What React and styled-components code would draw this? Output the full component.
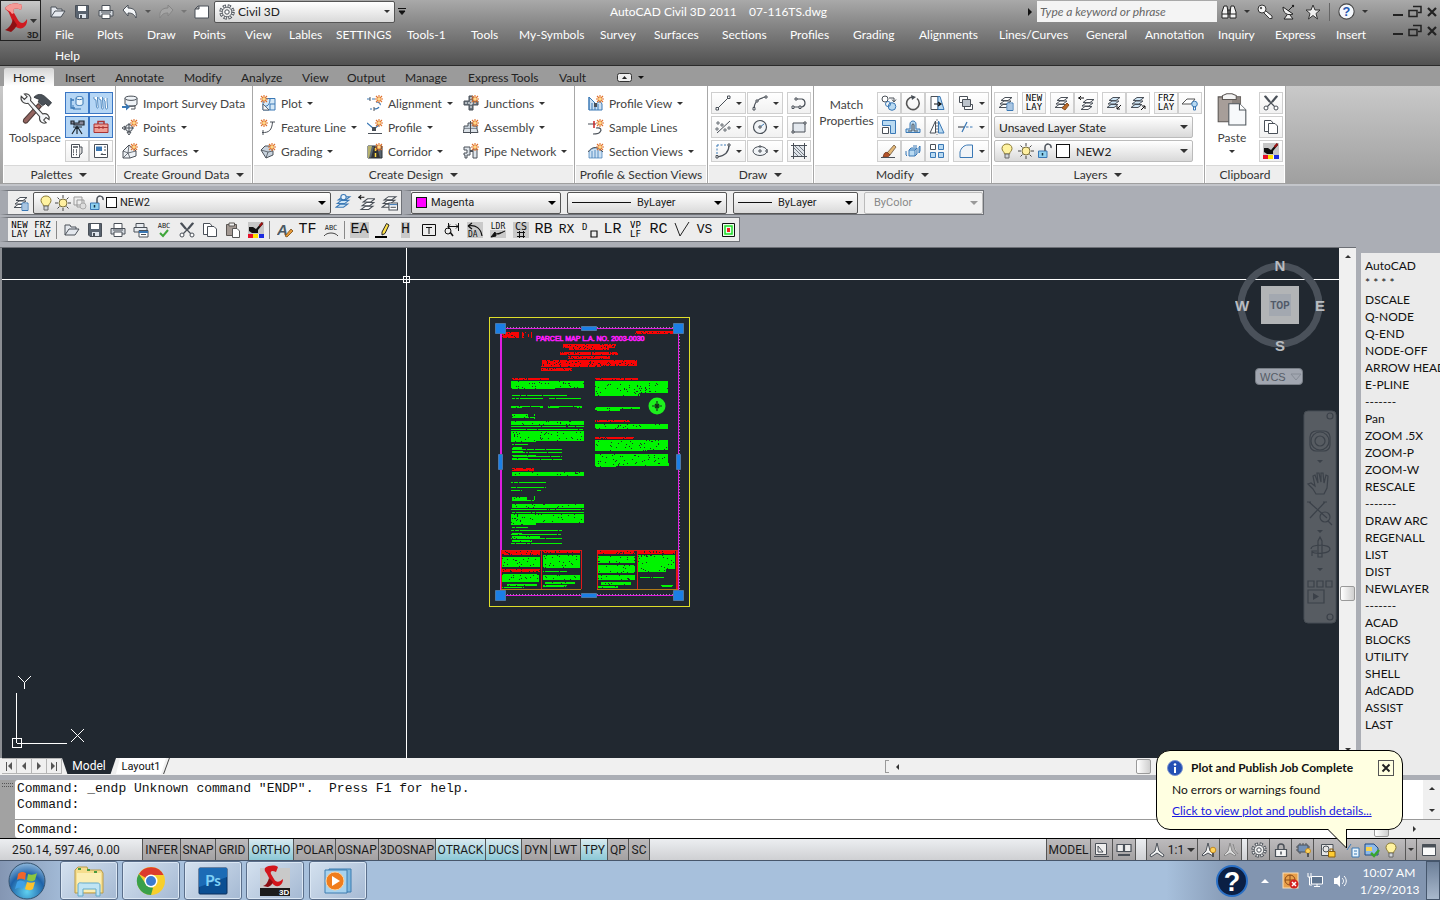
import styled, { createGlobalStyle, css } from "styled-components";

const UI = `"Lato", "Open Sans", sans-serif`;
const DENSE = `"Roboto", "Liberation Sans", sans-serif`;
const MONO = `"Liberation Mono", "DejaVu Sans Mono", monospace`;

const GlobalStyle = createGlobalStyle`
  *, *::before, *::after { box-sizing: border-box; }
  body { margin: 0; font-family: ${UI}; font-size: 12px; color: #222; }
  button, select, input { font: inherit; color: inherit; }
  button { padding: 0; border: 0; background: none; cursor: pointer; }
`;

/* ---------- icons ---------- */

const K = "#4a5058";
const B = "#3a78b5";
const L = "#b9daf2";

const Spark = () => (
  <g transform="translate(12 4)">
    <path d="M0-4V4M-4 0H4M-3-3L3 3M-3 3L3-3" stroke="#e0702a" strokeWidth="1.1" />
    <circle r="1.7" fill="#ffd98a" stroke="none" />
  </g>
);

const Layers = ({ fill = "#fff", color = K }) => (
  <g stroke={color} fill={fill}>
    <path d="M1 12.500L5 9.500H12L8 12.500Z" />
    <path d="M2 9L6 6H13L9 9Z" />
    <path d="M3 5.500L7 2.500H14L10 5.500Z" />
  </g>
);

const ICONS = {
  open: <path d="M1 13V3H6L7 5H12V7M1 13L5 7H15L11 13Z" fill="#e4e8ee" stroke={K} />,
  save: <><path d="M1.500 1.500H14.500V14.500H3L1.500 13Z" fill="#59636f" stroke={K} /><path d="M4 2H12V7H4Z" fill="#fff" /><path d="M5 10H12V14H5Z" fill="#dfe5ec" /><path d="M6 11H8V14H6Z" fill={K} /></>,
  print: <><path d="M4 6V1.500H12V6" fill="#fff" stroke={K} /><path d="M1 6.500H15V12H1Z" fill="#d5dae0" stroke={K} /><path d="M4 10H12V14.500H4Z" fill="#fff" stroke={K} /><path d="M3 8H13" stroke={K} /></>,
  preview: <><path d="M3 5V1.500H11V5M1 5.500H14V10H1Z" fill="#e8ecf0" stroke={K} /><path d="M6 8.500H15V15H6Z" fill="#fff" stroke={K} /><path d="M6 10H15" stroke={B} strokeWidth="2" /><path d="M8 12.500H13" stroke={K} /></>,
  undo: <path d="M1 6L6 1V4C12 4 15 7 14 14C12 10 10 9 6 9V12Z" fill="#f4f6f8" stroke={K} />,
  redo: <path d="M15 6L10 1V4C4 4 1 7 2 14C4 10 6 9 10 9V12Z" fill="#a5a5a5" stroke="#858585" />,
  sheet: <path d="M1 14V5L4 2H14.500V14ZM1 5H5V2" fill="#fff" stroke={K} />,
  gear: <><circle cx="8" cy="8" r="5.900" stroke={K} strokeWidth="3.600" strokeDasharray="3 1.630" /><circle cx="8" cy="8" r="5.900" stroke="#eee" strokeWidth="2" strokeDasharray="1.400 3.230" strokeDashoffset="-.8" /><circle cx="8" cy="8" r="4.800" fill="#eee" stroke={K} strokeWidth=".8" /><circle cx="8" cy="8" r="2.200" fill="#fff" stroke={K} /></>,
  binoc: <><path d="M1 14V8L3 2H6L7 8V14ZM15 14V8L13 2H10L9 8V14Z" fill="#f4f4f4" stroke="#222" /><path d="M7 6H9V10H7ZM1 10H7M9 10H15" fill="#888" stroke="#222" /></>,
  key: <><path d="M7 9L12.500 14.500H15V12L9 7" fill="#f6f6f6" stroke="#333" /><circle cx="5" cy="5" r="4" fill="#f6f6f6" stroke="#333" /><circle cx="4" cy="4" r="1.200" fill="#555" /></>,
  dish: <><path d="M2 3C2 9 6 12 12 10Z" fill="#f0f0f0" stroke="#222" /><path d="M7 7L13 1M6 11L3 15H12L9 11" fill="#eee" stroke="#222" /><circle cx="12" cy="2" r="1.200" fill="#222" /></>,
  star: <path d="M8 1L10 6H15L11 9.500L12.500 15L8 11.500L3.500 15L5 9.500L1 6H6Z" fill="#eee" stroke="#333" />,
  help: <><circle cx="8" cy="8" r="7.200" fill="#f4f7fb" stroke="#444" /><text x="8" y="12.500" textAnchor="middle" fontSize="12" fontWeight="700" fill="#2456b0" fontFamily="Liberation Sans">?</text></>,
  min: <path d="M3 11H13" stroke="#222" strokeWidth="2" />,
  restore: <><path d="M6 2.500H14V8.500H11" stroke="#222" strokeWidth="1.500" /><path d="M2 6.500H10V12.500H2Z" stroke="#222" strokeWidth="1.500" /></>,
  close: <path d="M4 4L12 12M12 4L4 12" stroke="#222" strokeWidth="2.200" />,
  tools: <><path d="M9.500 5.500L11 6.800L4.200 14.500C3.200 15 2 14 2.700 12.900Z" fill="#946560" stroke="#4c3835" strokeWidth=".5" /><path d="M7.500 2.500C9 .8 11 .8 12.500 2L15.800 5L14.300 6.700L13 5.500L11.500 6.500L9.500 4.700L10 3.500Z" fill="#4a5158" stroke="#2e3338" strokeWidth=".4" /><path d="M1.500 2L3 3.500L4.300 2.200L3 1C5 .5 6.400 2 5.900 4L11.600 10.300C13.500 9.800 15 11 14.600 13L13.200 12L12.100 13.200L13.300 14.500C11.300 15.200 9.700 13.700 10.200 11.600L4.700 5.300C2.700 5.800 1 4.200 1.500 2Z" fill="#f4f6f8" stroke="#444" strokeWidth=".5" /></>,
  toolspace: <><path d="M2 3V13H6M2 5H5" stroke={B} strokeWidth="1.300" /><path d="M7 3C7 1 14 1 14 3V9C14 11 7 11 7 9Z" fill="#e8f4fc" stroke={B} /><path d="M7 3.500C8 5 13 5 14 3.500M4 10V14H12" stroke={B} /></>,
  wrenches: <path d="M1 2V4L3 5L3.500 12C4 14 6 13 5 11L4.500 5V2M6 2V4L8 5L8.500 13C9 15 11 14 10 12L9.500 5V2M11 3V5L12 6L12.500 13C13 15 15 14 14.500 12L14 6V3" fill="#fff" stroke={B} strokeWidth=".8" />,
  survey: <path d="M2 2H5V4H10V2H15V6H5V5H2ZM8 7L3 15M8 7V15M8 7L13 15M4 8H13" stroke="#1e2830" strokeWidth="1.200" fill="#889" />,
  toolbox: <><path d="M5 5V2.500H11V5" stroke="#a33" strokeWidth="1.500" /><path d="M1 5H15V13.500H1Z" fill="#ef9e94" stroke="#a33" /><path d="M1 8.500H15M6 7V10M10 7V10" stroke="#a33" /></>,
  calc: <><path d="M2.500 1.500H10.500V14.500H2.500Z" fill="#fff" stroke={K} /><path d="M4 4H9M4 7H5M7 7H8M4 9H5M7 9H8M4 11.500H5M7 11.500H8" stroke={K} strokeWidth="1.400" /><path d="M10.500 4H13V10L10.500 12" fill="#ddd" stroke={K} /></>,
  propPalette: <><path d="M1.500 1.500H14.500V14.500H1.500Z" fill="#fff" stroke={K} /><path d="M3 3.500H9V8H3Z" fill={B} /><path d="M11 4H13M11 7H13M8 11.500L9.500 10M8 11.500H13" stroke={K} /></>,
  importSurvey: <><path d="M3 3C3 .5 15 .5 15 3V9C15 12 3 12 3 9Z" fill="#f0f4f8" stroke={K} /><path d="M3 3.500C4 6 14 6 15 3.500M7 11H13V14H9" stroke={K} /><path d="M0 11H4V8.500L8 12L4 15.500V13H0Z" fill={B} /></>,
  points: <><circle cx="7" cy="9" r="3.500" fill="#eef2f6" stroke={K} /><path d="M7 4V14M2 9H12M0 9L3 7V11ZM7 16L5 13H9Z" stroke={K} fill="#fff" /><Spark /></>,
  surfaces: <><path d="M1 15V8L7 2L14 8V13L8 15Z" fill="#eef2f6" stroke={K} /><path d="M1 8L6 10L14 8M6 10L8 15M6 10L1 15M7 2L6 10" stroke={K} strokeWidth=".8" /><Spark /></>,
  plot: <><path d="M3 3.500H15V15H3Z" fill="#d4e8f7" stroke={B} /><path d="M3 11C7 12 10 10 10 4M10 15V9H15" stroke={B} /><path d="M3 15V9L9 15Z" fill="#f4f6f8" stroke={K} strokeWidth=".8" /><g transform="translate(-8 0)"><Spark /></g></>,
  feature: <><path d="M2 13.500C9 14 12 11 12.500 3M10 3H15M3 11V16" stroke={K} /><g transform="translate(-8 0)"><Spark /></g></>,
  grading: <><path d="M1 7L5 3H10L13 8V12L6 15Z" fill="#c8d3de" stroke={K} /><path d="M1 7L8 9L13 8M8 9L6 15" stroke={K} strokeWidth=".8" /><Spark /></>,
  alignment: <><path d="M0 4H3M5 4H8M9 7C12 7 14 9 13 10M12 12C11 14 9 14 7 14M5 14H3" stroke={B} strokeWidth="1.200" /><path d="M3 2V6M7 12V16" stroke={K} /><Spark /></>,
  profile: <><path d="M1 14.500H15" stroke={K} /><path d="M0 4L7 10L12 6" stroke={B} strokeWidth="1.300" /><path d="M5 8H9V12H5Z" fill={K} /><Spark /></>,
  corridor: <><path d="M1 3H15V15H1Z" fill="#59646e" stroke="#2b3238" /><path d="M4 15L7 4H10L13 15Z" fill="#333" /><path d="M8.500 5V8M8.500 10V14" stroke="#ffd940" strokeWidth="1.500" /><path d="M1 3H5L2 15H1Z" fill="#b6b16e" /><Spark /></>,
  junction: <><path d="M6 1H10V6H15V10H10V15H6V10H1V6H6Z" fill="#6b7680" stroke="#4a5058" /><path d="M8 2V14M2 8H14" stroke="#fff" strokeDasharray="2 1" /><Spark /></>,
  assembly: <><path d="M1 7H5V4H10V7H14V10H1Z" fill="#c6d0d9" stroke={K} /><path d="M1 10L0 13.500H15L14 10M7.500 2V15" fill="#dce2e8" stroke={K} /><Spark /></>,
  pipe: <><path d="M1 4H7V12H4V15H2V12H1V10H4V7H1ZM10 6H14V15H10Z" fill="#dfe5eb" stroke={K} /><path d="M7 8H10" stroke={K} strokeWidth="2" /><Spark /></>,
  profileView: <><path d="M1 15V2L5 6L8 9L12 6L14 9V15Z" fill="#cde1f3" stroke={B} /><path d="M4 8V15M7 11V15M10 9V15M1 2V15" stroke={B} /><path d="M6 8H9V12H6Z" fill={K} /><Spark /></>,
  sampleLines: <><path d="M0 5H8M8 9C13 8 14 11 12 13C11 15 8 15 5 15" stroke={K} strokeWidth="1.200" /><path d="M6 2V9" stroke="#c22" strokeWidth="1.500" /><Spark /></>,
  sectionViews: <><path d="M1 15V9C4 4 10 3 14 9V15Z" fill="#cde1f3" stroke={B} strokeWidth=".7" /><path d="M4 8V15M7 7V15M10 7V15" stroke={B} strokeWidth=".8" /><path d="M0 9C4 3 10 3 15 9" stroke={K} /><Spark /></>,
  line: <><path d="M2 14L14 2" stroke={K} /><path d="M1 12.500H3.500V15H1ZM12.500 1H15V3.500H12.500Z" fill="#fff" stroke={K} /></>,
  arc: <><path d="M2 14C2 8 6 3 14 2" stroke={K} strokeWidth="1.200" /><path d="M1 12.500H3V15H1ZM4 5H6V7H4ZM13 1H15V3H13Z" fill="#fff" stroke={K} /></>,
  pline: <><path d="M2 12H11C15 11 15 5 11 4H5" stroke={K} strokeWidth="1.200" /><path d="M1 11H3V13.500H1ZM8 11H10V13.500H8ZM4 3H6V5H4Z" fill="#fff" stroke={K} /></>,
  divide: <><path d="M2 14L15 2" stroke={K} /><path d="M2 3H4V5H2ZM6 5H8V7H6ZM1 9H3V11H1ZM9 10H11V12H9ZM13 8H15V10H13Z" fill="#fff" stroke={K} strokeWidth=".8" /></>,
  circle: <><circle cx="8" cy="8" r="6.500" fill="#f1f4f7" stroke={K} strokeWidth="1.200" /><path d="M8 8L12 5" stroke={B} /><path d="M7 7H9V9H7Z" fill="#fff" stroke={K} /></>,
  rect: <><path d="M2 4H14V13H2Z" fill="#e3e8ee" stroke={K} /><path d="M1 12H3V14H1ZM13 3H15V5H13Z" fill="#fff" stroke={K} /></>,
  fillet: <><path d="M2 2H12M2 2V13" stroke={B} strokeDasharray="2 1.500" /><path d="M14 2C14 9 10 13 2 14" stroke={K} strokeWidth="1.200" /><path d="M1 12.500H3V15H1ZM13 1H15V3H13Z" fill="#fff" stroke={K} /></>,
  ellipse: <><ellipse cx="8" cy="8" rx="7" ry="4.500" fill="#f1f4f7" stroke={K} /><path d="M7 7H9V9H7ZM7 3H9V4H7ZM14 7H16V9H14Z" fill="#fff" stroke={K} /></>,
  hatch: <><path d="M3 3H13V13H3Z" fill="#dfe4ea" /><path d="M2.500 0V16M13.500 0V16M0 2.500H16M0 13.500H16" stroke={K} /><path d="M3 9L7 13M3 5L11 13M4 3L13 12M8 3L13 8" stroke={K} strokeWidth=".7" /></>,
  copyObj: <><circle cx="4" cy="4" r="3" fill="#fff" stroke={K} /><circle cx="11" cy="11.500" r="3.800" fill={L} stroke={B} /><circle cx="7" cy="9" r="2.500" stroke={B} /><path d="M8 3H13V6M11 4.500L13 7L15 4.500" stroke={K} /></>,
  rotate: <><path d="M8 2A6.300 6.300 0 1 0 12 3.500" stroke="#555" strokeWidth="1.600" /><path d="M6 0L11 2L7 5Z" fill={K} /></>,
  stretch: <><path d="M2 1.500H9V14.500H2Z" fill="#fff" stroke={K} /><path d="M9 1.500H11L15 14.500H9Z" fill={L} stroke={B} /><path d="M5 9H11M9 7L12 9L9 11" stroke="#111" strokeWidth="1.200" /></>,
  scale: <><path d="M1.500 1.500H14.500V14.500H9.500V6.500H1.500Z" fill={L} stroke={B} /><path d="M1.500 8.500H7.500V14.500H1.500Z" fill="#fff" stroke={K} /></>,
  offset: <><path d="M1 13.500H15V10H11V5C11 1 5 1 5 5V10H1Z" fill={L} stroke={B} /><path d="M3 12H7V6C7 4.500 9 4.500 9 6V12H13" stroke={K} /></>,
  mirror: <><path d="M6.500 2V14H1Z" fill="#fff" stroke={K} /><path d="M9.500 2V14H15Z" fill={L} stroke={B} /><path d="M8 0V16" stroke={K} strokeDasharray="2 1" strokeWidth=".7" /></>,
  erase: <><path d="M6 10L13 2L15 4L9 12Z" fill="#e3b878" stroke="#5b4630" strokeWidth=".7" /><path d="M3 11C4 9 6 9 7 10L9 12C7 15 5 14 2 14Z" fill="#b4532a" stroke="#6b3018" strokeWidth=".7" /><path d="M0 14.500H14" stroke={K} /></>,
  explode: <><path d="M4 7H10V13H4ZM4 7L6 5H12L10 7M12 5V11L10 13" fill={L} stroke={B} /><path d="M1 8V12L2 13M8 3H12M14 4V10L15 8V3Z" fill={L} stroke={B} /></>,
  array: <><path d="M1.500 1.500H6.500V6.500H1.500Z" fill="#fff" stroke={K} /><path d="M9.500 1.500H14.500V6.500H9.500ZM1.500 9.500H6.500V14.500H1.500ZM9.500 9.500H14.500V14.500H9.500Z" fill={L} stroke={B} /></>,
  order: <><path d="M1.500 1.500H9.500V7.500H1.500ZM6.500 9.500H14.500V14.500H6.500Z" fill="#fff" stroke={K} /><path d="M4.500 4.500H12.500V11.500H4.500Z" fill="#bcc3cb" stroke={K} /></>,
  trim: <><path d="M0 8H7" stroke={K} strokeWidth="1.200" /><path d="M8 8H16" stroke={B} strokeWidth="1.200" strokeDasharray="2.500 1.500" /><path d="M4 13L9 3" stroke={B} strokeWidth="1.200" /></>,
  fillet2: <path d="M2 14.500V9C3 5 6 2 10 2H14.500V14.500Z" fill="#f1f4f7" stroke={B} />,
  layerProps: <><Layers /><path d="M9 8H15V15.500H9Z" fill="#e6f0fa" stroke={B} /><path d="M10 10H14M10 12H14M10 14H14" stroke={B} strokeWidth=".7" /></>,
  layerMatch: <><Layers /><path d="M8 13L13 8L15 10L11 15Z" fill="#b96a2a" stroke="#8b5220" /></>,
  layerPrev: <><g transform="translate(2 2)"><Layers /></g><path d="M0 3H6M3 1L1 3L3 5" stroke="#111" /></>,
  layerIso: <><Layers fill="#cfe6f6" /><path d="M15 10L11 14M11 11V14H14" stroke="#111" /></>,
  layerUniso: <><Layers fill="#cfe6f6" /><path d="M11 15L15 11M12 11H15V14" stroke="#111" /></>,
  layerOff: <><path d="M0 9L5 4H13L9 9Z" fill="#fff" stroke="#555" /><circle cx="12.500" cy="9" r="2.800" fill={L} stroke={B} /><path d="M11.500 12H13.500V15H11.500Z" fill="#fff" stroke={B} /></>,
  layerCurrent: <><Layers fill="#cfe6f6" color={B} /><circle cx="8" cy="3" r="2.500" fill="#eaf4fc" stroke={B} /></>,
  layerStates: <><Layers /><path d="M7.500 8.500H15.500V15H7.500Z" fill="#fff" stroke={K} /><path d="M8 10H15" stroke={B} /><path d="M9 12.500H14" stroke={K} /></>,
  bulb: <><path d="M5.500 11C5.500 9 3 8 3 5.500C3 -.5 13 -.5 13 5.500C13 8 10.500 9 10.500 11Z" fill="#fff3a0" stroke="#8a7a35" /><path d="M6 11H10V15H6Z" fill="#d0d4d8" stroke="#666" /></>,
  sun: <><path d="M8 0V3M8 13V16M0 8H3M13 8H16M2.500 2.500L4.500 4.500M11.500 11.500L13.500 13.500M13.500 2.500L11.500 4.500M4.500 11.500L2.500 13.500" stroke="#444" /><circle cx="8" cy="8" r="4" fill="#fff0a0" stroke="#7b703c" /></>,
  vpFreeze: <><path d="M2 2H10V10H2ZM5 5H12V12H5Z" fill="#eee" stroke="#999" /><circle cx="11" cy="11" r="3" fill="#ddd" stroke="#aaa" /></>,
  lock: <><path d="M1.500 8H10V14.500H1.500Z" fill="#8fd0ee" stroke={B} /><path d="M8 8V4C8 0 15 0 14 5" stroke={K} strokeWidth="1.500" /><path d="M5.500 10V12.500" stroke="#134" strokeWidth="1.500" /></>,
  pasteBig: <><path d="M1.500 2.300H12V14H1.500Z" fill="#a79e99" stroke="#5b5653" strokeWidth=".5" /><path d="M8 2.500H12V14H8Z" fill="#8d8580" /><path d="M3.500 1.700L5.500 .8H8L10 1.700V3.500H3.500Z" fill="#f4f4f4" stroke="#5b5653" strokeWidth=".5" /><path d="M6.500 5.500H11.500L14.500 8.500V15.500H6.500Z" fill="#f7f9fb" stroke="#4f565c" strokeWidth=".5" /><path d="M11.500 5.500V8.500H14.500" fill="#fff" stroke="#4f565c" strokeWidth=".5" /></>,
  paste: <><path d="M1.500 2.500H11.500V13.500H1.500Z" fill="#a39993" stroke="#5b5653" /><path d="M4 1H9.500V4H4Z" fill="#f0f0f0" stroke="#5b5653" /><path d="M7.500 6.500H12L14.500 9V15.500H7.500Z" fill="#fff" stroke="#555" /></>,
  cut: <><path d="M1.500 1L12 12M14.500 1L4 12" stroke={K} strokeWidth="1.200" /><path d="M2 1L7 7M14 1L9 7" stroke={K} strokeWidth="2" /><circle cx="3" cy="13" r="2" fill="#fff" stroke={K} /><circle cx="13" cy="13" r="2" fill="#fff" stroke={K} /></>,
  copy: <><path d="M1.500 1.500H8L10 4V12.500H1.500Z" fill="#fff" stroke={K} /><path d="M5.500 4.500H12L14.500 7V14.500H5.500Z" fill="#fff" stroke={K} /></>,
  matchProp: <><path d="M0 0H16V12H0Z" fill="#c6c6c6" /><path d="M1 5H5L8 7L14 0L15 2L10 8V11H4L1 9Z" fill="#111" /><path d="M11 3L14 0L15 2L12 5Z" fill="#a01010" /><path d="M0 12H5V16H0Z" fill="#e8102a" /><path d="M5 12H10V16H5Z" fill="#ffe000" /><path d="M11 12H16V16H11Z" fill="#1b2be0" /></>,
  spell: <><text x="8" y="6" textAnchor="middle" fontSize="7" fill="#222" fontFamily="DejaVu Sans Mono">ABC</text><path d="M4 11L7 14L12 8" stroke="#3fa63a" strokeWidth="2" /></>,
  textEdit: <><text x="0" y="13" fontSize="15" fontStyle="italic" fontWeight="700" fill="#4b5963" fontFamily="Liberation Sans">A</text><path d="M8 14L14 7L16 9L10 15Z" fill="#e79a39" stroke="#7b4b10" strokeWidth=".8" /></>,
  abcArc: <><text x="8" y="8" textAnchor="middle" fontSize="7" fill="#222" fontFamily="DejaVu Sans Mono">ABC</text><path d="M1 14C4 10 12 10 15 14" stroke="#444" /></>,
  pen: <><path d="M0 15H12" stroke="#000" strokeWidth="2" /><path d="M7 10L11.500 1.500L14 3L10 11.500L7 13Z" fill="#ffe14a" stroke="#222" /></>,
  textBox: <><path d="M1.500 2.500H14.500V13.500H1.500Z" stroke="#111" /><path d="M5 5.500H11M8 5V12" stroke="#111" /></>,
  dim: <><path d="M4.500 1V7M14.500 1V9M4 4.500H14M6 2.500L4 4.500L6 6.500M12 2.500L14 4.500L12 6.500" stroke="#111" /><circle cx="4" cy="9" r="3" stroke="#111" /><path d="M6 10L9 14" stroke="#111" strokeWidth="1.500" /></>,
  dimArc: <><path d="M0 0H16V16H0Z" fill="#c9c9c9" /><path d="M1 4C9 2 14 7 15 14M1 4L5 1M1 4L5 7" stroke="#111" strokeWidth="1.200" /><text x="1" y="15" fontSize="8" fill="#111" fontFamily="DejaVu Sans Mono">DA</text></>,
  leader: <><path d="M0 8H16V16H0Z" fill="#c9c9c9" /><text x="8" y="7" textAnchor="middle" fontSize="8" fill="#111" fontFamily="DejaVu Sans Mono">LDR</text><path d="M15 9L9 12H5M5 10L1 15L6 14Z" stroke="#111" fill="#111" /></>,
  callout: <><path d="M0 0H16V16H0Z" fill="#c9c9c9" /><text x="8" y="8" textAnchor="middle" fontSize="10" fill="#111" fontFamily="DejaVu Sans Mono">CS</text><path d="M4 10.500H12M4 14.500H12M6.500 9V16M10.500 9V16" stroke="#111" /></>,
  dBox: <><text x="0" y="8" fontSize="9" fill="#111" fontFamily="DejaVu Sans Mono">D</text><path d="M9 9H15V15H9Z" stroke="#111" strokeWidth="1.200" /></>,
  vee: <path d="M1 1L6 14L15 0" stroke="#222" />,
  green: <><path d="M2.500 1.500H14.500V14.500H2.500Z" fill="#eaffea" stroke="#111" /><path d="M5 4H12V12H5Z" stroke="#1edc2a" strokeWidth="1.500" /><path d="M7 6H10V10H7Z" fill="#e22" /></>,
  info: <><circle cx="8" cy="8" r="7.500" fill="#2450b4" stroke="#7c93cf" /><path d="M7 7H9V13H7Z" fill="#fff" /><circle cx="8" cy="4.500" r="1.300" fill="#fff" /></>,
  modelSpace: <><path d="M1.500 1.500H12.500V12.500H1.500Z" fill="#eee" stroke={K} /><path d="M4 4V10H9ZM0 14.500H15" stroke={K} /></>,
  quickView: <><path d="M1 2.500H7.500V9.500H1ZM8.500 2.500H15V9.500H8.500Z" fill="#eee" stroke={K} strokeWidth="1.200" /><path d="M2 13H14" stroke={K} strokeWidth="2" /></>,
  annoScale: <path d="M8 1L10 9L15 13L14 15L8 11L2 15L1 13L6 9Z" fill="#f3f3f3" stroke={K} />,
  annoVis: <><path d="M7 1L9 9L13 13L12 14L7 11L2 14L1 13L5 9Z" fill="#f3f3f3" stroke={K} /><circle cx="12" cy="8" r="2.800" fill="#ffd35a" stroke="#c08a24" /><path d="M12 11V15" stroke="#555" strokeWidth="2" /></>,
  annoAuto: <path d="M7 1L9 9L13 13L12 14L7 11L2 14L1 13L5 9ZM10 2L12 8L15 12" fill="#ddd" stroke="#888" />,
  padlock: <><path d="M5 8V5C5 1 11 1 11 5V8" stroke={K} strokeWidth="1.500" /><path d="M2.500 7.500H13.500V14.500H2.500Z" fill="#f4f4f4" stroke={K} strokeWidth="1.200" /><path d="M8 9.500V12.500" stroke={K} strokeWidth="1.500" /></>,
  hardware: <><path d="M3 3H13V10H3Z" fill="#7390b5" stroke={K} /><path d="M1 5H3M1 8H3M13 5H15M5 1V3M8 1V3M11 1V3M5 10V12" stroke={K} /><circle cx="13" cy="9" r="2.500" fill="#ffd35a" stroke="#c08a24" /><path d="M13 11V15" stroke="#555" strokeWidth="2" /></>,
  isolate: <><path d="M1.500 2.500H13V13.500H1.500Z" fill="#e6e6e6" stroke={K} /><circle cx="6" cy="7" r="3" stroke={K} /><path d="M8.500 9.500H15V15H8.500Z" fill="#ffcc33" stroke="#8a6010" /><path d="M10 9V7H13V9" stroke="#8a6010" /></>,
  plotDone: <><path d="M7 6H14V15H7Z" fill="#e9f5fd" stroke={B} /><path d="M9 9H12M9 12H12M2 8L6 2" stroke={B} /></>,
  layerRec: <><path d="M1 2H10L14 6V13H1Z" fill="#8db9e8" stroke="#1f4a86" /><path d="M2 5H8V9H2Z" fill="#f7d24e" /><path d="M7 11L10 14L15 8" stroke="#39a52e" strokeWidth="2.500" /></>,
  cleanScreen: <><path d="M1.500 2.500H14.500V13.500H1.500Z" fill="#fafafa" stroke={K} /><path d="M1 4H15" stroke={K} strokeWidth="3" /></>,
};

const Svg = styled.svg`
  display: block;
  flex: none;
`;

const Icon = ({ name, size = 16 }) => (
  <Svg width={size} height={size} viewBox="0 0 16 16" fill="none" aria-hidden="true">
    {ICONS[name]}
  </Svg>
);

const Caret = styled.span`
  display: inline-block;
  flex: none;
  width: 0;
  height: 0;
  border: ${({ $big }) => ($big ? 4 : 3)}px solid transparent;
  border-top-color: ${({ $color }) => $color || "#333"};
  border-bottom: 0;
`;

/* ---------- header ---------- */

const Screen = styled.div`
  display: flex;
  flex-direction: column;
  min-height: 100vh;
  overflow: hidden;
  position: relative;
  background: #abaeb5;
`;

const Header = styled.header`
  display: flex;
  align-items: flex-start;
  height: 66px;
  background: linear-gradient(#a9a9a9, #898989 35%, #515151);
  border-bottom: 1px solid #2b2b2b;
`;

const AppButton = styled.button`
  width: 41px;
  height: 41px;
  flex: none;
  border: 1px solid #222;
  background: linear-gradient(#c9c9c9, #777);
`;

const HeaderRows = styled.div`
  flex: 1;
  min-width: 0;
`;

const TitleRow = styled.div`
  display: flex;
  align-items: center;
  height: 23px;
`;

const QuickAccess = styled.div`
  display: flex;
  align-items: center;
  gap: 8px;
  padding: 0 4px 0 9px;

  ${Caret} { margin: 0 -1px; }
`;

const Title = styled.h1`
  flex: 1;
  margin: 0;
  text-align: center;
  font-size: 12px;
  font-weight: 400;
  white-space: pre;
  color: #fff;
`;

const Combo = styled.div`
  display: flex;
  align-items: center;
  gap: ${({ $gap }) => $gap ?? 3}px;
  width: ${({ $w }) => $w}px;
  height: 22px;
  padding: 0 4px;
  font-family: ${({ $dense }) => ($dense ? DENSE : UI)};
  font-size: ${({ $dense }) => ($dense ? 11 : 12)}px;
  color: ${({ $off }) => ($off ? "#888" : "#222")};
  border: 1px solid ${({ $edge }) => $edge || "#bbb"};
  border-radius: 2px;
  background: ${({ $off }) => ($off ? "#f2f2f2" : "linear-gradient(#fff, #ececec 50%, #d9d9d9)")};
`;

const Select = styled.select`
  flex: 1;
  min-width: 0;
  height: 100%;
  padding: 0;
  border: 0;
  outline: 0;
  appearance: none;
  opacity: 1;
  background: transparent;
`;

const SearchBox = styled.input`
  width: 180px;
  height: 21px;
  padding: 0 3px;
  border: 0;
  background: #f4f4f4;
  outline: 0;

  &::placeholder { color: #666; font-style: italic; }
`;

const Tools = styled.div`
  display: flex;
  align-items: center;
  gap: 8px;
  padding-left: 4px;

  ${Caret} { margin: 0 -1px; }
`;

const Rule = styled.span`
  width: 1px;
  height: 18px;
  background: #666;
`;

const WindowButtons = styled.div`
  display: flex;
  gap: 1px;
  margin-left: ${({ $push }) => ($push ? 23 : 0)}px;
`;

const Play = styled.span`
  margin-right: 5px;
  border: 4px solid transparent;
  border-left-color: #111;
  border-right: 0;
`;

const MenuRow = styled.div`
  display: flex;
  align-items: flex-start;
  justify-content: space-between;
`;

const MenuBar = styled.nav`
  display: flex;
  flex-wrap: wrap;
  padding: 1px 0 0 14px;
`;

const MenuItem = styled.button`
  width: ${({ $w }) => $w}px;
  height: 21px;
  text-align: left;
  color: #fff;
  white-space: nowrap;
`;

const TabBar = styled.nav`
  display: flex;
  align-items: flex-end;
  height: 20px;
  padding-left: 4px;
  background: #9b9b9b;
`;

const Tab = styled.button`
  width: ${({ $w }) => $w}px;
  height: 18px;
  padding-left: 9px;
  text-align: left;
  white-space: nowrap;
  color: #222;
  ${({ $on }) => $on && css`
    background: linear-gradient(#d5d5d5, #fff);
    border-radius: 2px 2px 0 0;
  `}

  &:not(:first-child) { padding-left: 11px; }
`;

const RibbonToggle = styled.button`
  display: flex;
  align-items: center;
  gap: 6px;
  height: 18px;
  padding: 0 0 0 9px;
`;

/* ---------- ribbon ---------- */

const Ribbon = styled.section`
  display: flex;
  height: 100px;
  padding: 0 0 1px 3px;
  background: linear-gradient(#c9c9c9, #9f9f9f);
  border-bottom: 2px solid #c3c5ca;
`;

const Panel = styled.div`
  display: flex;
  flex-direction: column;
  width: ${({ $w }) => $w}px;
  flex: none;
  background: #fff;
  border-right: 1px solid #a8a8a8;
`;

const PanelBody = styled.div`
  display: flex;
  gap: ${({ $gap }) => $gap || 0}px;
  height: 80px;
  padding: 6px 0 0 ${({ $left }) => $left || 0}px;
`;

const PanelTitle = styled.button`
  display: flex;
  align-items: center;
  justify-content: center;
  gap: 7px;
  height: 18px;
  margin: 0 1px;
  background: #eee;
  border-top: 1px solid #d8d8d8;
  color: #333;
  white-space: nowrap;
`;

const Column = styled.div`
  display: flex;
  flex-direction: column;
  gap: 2px;
  width: ${({ $w }) => ($w ? `${$w}px` : "auto")};
`;

const Row = styled.div`
  display: flex;
  gap: ${({ $gap }) => $gap || 0}px;
`;

const Command = styled.button`
  display: flex;
  align-items: center;
  gap: 5px;
  height: 22px;
  color: #444;
  white-space: nowrap;
`;

const BigButton = styled.button`
  display: flex;
  flex-direction: column;
  align-items: center;
  gap: 4px;
  width: ${({ $w }) => $w}px;
  padding-top: ${({ $top }) => $top || 0}px;
  color: #444;
  line-height: 16px;
`;

const Tool = styled.button`
  display: flex;
  align-items: center;
  justify-content: center;
  gap: 5px;
  width: ${({ $w }) => $w || 24}px;
  height: 22px;
  border: 1px solid ${({ $on }) => ($on ? "#3a76c4" : "#cfcfcf")};
  background: ${({ $on }) => ($on ? "#b5d6f5" : "linear-gradient(#fff, #f1f1f1)")};
`;

const PixelText = styled.span`
  display: block;
  font-family: "DejaVu Sans Mono", monospace;
  font-size: 9px;
  line-height: 9px;
  color: #000;
`;

const Swatch = styled.span`
  flex: none;
  width: ${({ $s }) => $s}px;
  height: ${({ $s }) => $s}px;
  border: 1px solid #111;
  background: ${({ $color }) => $color};
`;

/* ---------- docked toolbars ---------- */

const Dock = styled.section`
  display: flex;
  flex-direction: column;
  align-items: flex-start;
  gap: 2px;
  height: 61px;
  padding-top: 4px;
`;

const Toolbar = styled.div`
  display: flex;
  align-items: center;
  height: 25px;
  padding-left: ${({ $left }) => $left || 0}px;
  gap: ${({ $gap }) => $gap || 0}px;
  background: #ededed;
  border: 1px solid #6f7278;
  border-left: ${({ $grip }) => $grip || 0}px solid #a5a8af;
`;

const BarButton = styled.button`
  display: flex;
  align-items: center;
  justify-content: center;
  width: 23px;
  height: 22px;
`;

const BarRule = styled.span`
  width: 1px;
  height: 18px;
  margin: 0 3px 0 2px;
  background: #888;
`;

const Letters = styled.span`
  font-family: ${MONO};
  font-size: ${({ $small }) => ($small ? 13 : 15)}px;
  line-height: 16px;
  color: #111;
  background: ${({ $shade }) => ($shade ? "#c9c9c9" : "transparent")};
`;

const LineSample = styled.span`
  flex: none;
  width: ${({ $w }) => $w}px;
  height: 1px;
  background: #111;
`;

/* ---------- workspace ---------- */

const Workspace = styled.main`
  display: flex;
  flex: 1;
`;

const DrawingArea = styled.div`
  display: flex;
  flex-direction: column;
  flex: 1;
  min-width: 0;
  border-top: 1px solid #6c6f75;
`;

const CanvasRow = styled.div`
  display: flex;
  flex: 1;
`;

const Canvas = styled.div`
  position: relative;
  flex: 1;
  overflow: hidden;
  background: #212830;
  border-left: 2px solid #8b8e93;
`;

const CrossHair = styled.svg`
  position: absolute;
  inset: 0;
  width: 100%;
  height: 100%;
`;

const Sheet = styled.svg`
  position: absolute;
  left: 487px;
  top: 69px;
`;

const Ucs = styled.svg`
  position: absolute;
  left: 8px;
  bottom: 6px;
`;

const Overlay = styled.div`
  position: absolute;
  right: 2px;
  top: 9px;
  display: flex;
  flex-direction: column;
  align-items: flex-end;
`;

const Wcs = styled.button`
  display: flex;
  align-items: center;
  gap: 4px;
  width: 48px;
  height: 17px;
  margin: 9px 34px 25px 0;
  padding-left: 4px;
  border: 1px solid #777d85;
  border-radius: 4px;
  background: #a1a6b0;
  color: #555c66;
  font-family: "Liberation Sans", sans-serif;
  font-size: 11px;
`;

const VScroll = styled.div`
  display: flex;
  flex-direction: column;
  align-items: center;
  width: 17px;
  padding: 7px 0;
  background: #f0f0f0;
`;

const Thumb = styled.span`
  flex: none;
  width: 15px;
  height: 15px;
  border: 1px solid #999;
  border-radius: 2px;
  background: linear-gradient(90deg, #fff, #cfcfcf);
`;

const Spacer = styled.span`
  flex: ${({ $f }) => $f || 1};
`;

const Arrow = styled.span`
  flex: none;
  width: 0;
  height: 0;
  border: ${({ $s }) => $s || 3}px solid transparent;
  ${({ $dir, $c = "#333" }) => ({
    up: `border-bottom-color: ${$c}; border-top: 0;`,
    down: `border-top-color: ${$c}; border-bottom: 0;`,
    left: `border-right-color: ${$c}; border-left: 0;`,
    right: `border-left-color: ${$c}; border-right: 0;`,
  })[$dir]}
`;

const LayoutBar = styled.div`
  display: flex;
  height: 17px;
  background: #f0f0f0;
`;

const LayoutTabs = styled.div`
  display: flex;
  flex: 0 0 65%;
  padding-left: 2px;
`;

const NavButton = styled.button`
  display: flex;
  align-items: center;
  justify-content: center;
  gap: 1px;
  width: 15px;
  height: 16px;
  border: 1px solid #b5b5b5;
  border-left: 0;
`;

const Tick = styled.span`
  width: 1px;
  height: 9px;
  background: #555;
`;

const LayoutTab = styled.button`
  width: ${({ $w }) => $w}px;
  height: 16px;
  font-family: ${DENSE};
  font-size: ${({ $on }) => ($on ? 12 : 11)}px;
  line-height: 17px;
  color: ${({ $on }) => ($on ? "#fff" : "#111")};
  background: ${({ $on }) => ($on ? "#212830" : "#fff")};
  clip-path: ${({ $on }) => ($on ? "polygon(0 0, 100% 0, 90% 100%, 10% 100%)" : "polygon(8% 0, 100% 0, 90% 100%, 0 100%)")};
`;

const TabEdge = styled.span`
  width: 1px;
  height: 16px;
  background: #444;
  transform: skewX(-20deg);
`;

const HScroll = styled.div`
  display: flex;
  align-items: center;
  flex: 1;
  gap: 7px;
`;

const Splitter = styled.span`
  width: 4px;
  height: 13px;
  margin-left: 4px;
  border: 1px solid #999;
  border-right: 0;
`;

const ScreenMenu = styled.nav`
  display: flex;
  flex-direction: column;
  width: 79px;
  margin: 6px 0 0 5px;
  padding: 4px 0 0 4px;
  background: #ebebeb;
`;

const ScreenMenuItem = styled.button`
  height: 17px;
  text-align: left;
  white-space: nowrap;
  color: #111;
`;

/* ---------- command line and status bar ---------- */

const CommandWindow = styled.section`
  display: flex;
  height: 58px;
  margin-top: 5px;
  background: #a2a2a2;
  font-family: ${MONO};
  font-size: 13px;
  color: #111;
`;

const Grip = styled.div`
  width: 15px;
  padding: 3px 2px;

  &::before {
    content: "";
    display: block;
    height: 4px;
    border: dotted #555;
    border-width: 1px 0;
  }
`;

const CommandText = styled.div`
  flex: 1;
  background: #fff;
  border-radius: 3px 0 0 3px;
`;

const History = styled.div`
  display: flex;
  justify-content: space-between;
  height: 40px;
  padding-left: 2px;
  border-bottom: 1px solid #999;
`;

const Log = styled.pre`
  margin: 0;
  padding-top: 1px;
  font: inherit;
  line-height: 16px;
`;

const HistoryScroll = styled.div`
  display: flex;
  flex-direction: column;
  align-items: center;
  justify-content: space-between;
  width: 17px;
  padding: 7px 0;
  background: #f0f0f0;
`;

const Prompt = styled.label`
  display: flex;
  align-items: center;
  height: 18px;
  padding-left: 2px;
`;

const PromptInput = styled.input`
  flex: 1;
  border: 0;
  outline: 0;
  background: transparent;
`;

const PromptScroll = styled.div`
  display: flex;
  align-items: center;
  gap: 24px;
  width: 80px;
  height: 18px;
  padding-left: 14px;
  background: #f0f0f0;
`;

const StatusBar = styled.section`
  display: flex;
  height: 23px;
  border-top: 1px solid #000;
  border-bottom: 1px solid #47566b;
  background: linear-gradient(#eceef1, #cfd0d3);
  font-family: ${DENSE};
  color: #1a1a1a;
`;

const Coordinates = styled.output`
  width: 142px;
  padding-left: 12px;
  line-height: 23px;
`;

const StatusToggle = styled.button`
  display: flex;
  align-items: center;
  justify-content: center;
  gap: 3px;
  width: ${({ $w }) => $w}px;
  white-space: nowrap;
  border-left: 1px solid #555;
  background: ${({ $on }) => ($on ? "linear-gradient(#d8eaf0, #8cc8d6)" : "linear-gradient(#bdbbbd, #a3a1a2)")};
`;

const StatusGap = styled.span`
  width: ${({ $w }) => $w}px;
  border-left: 1px solid #555;
`;

/* ---------- notification ---------- */

const Balloon = styled.aside`
  position: absolute;
  right: 37px;
  bottom: 70px;
  width: 247px;
  height: 80px;
  padding: 8px 8px 0 10px;
  border: 1px solid #000;
  border-radius: 14px;
  background: #ffffe1;
  color: #111;
`;

const BalloonHead = styled.div`
  display: flex;
  align-items: center;
  gap: 8px;
  height: 17px;
`;

const BalloonTitle = styled.strong`
  flex: 1;
  font-weight: 700;
  white-space: nowrap;
`;

const BalloonClose = styled.button`
  display: flex;
  align-items: center;
  justify-content: center;
  width: 16px;
  height: 16px;
  border: 1px solid #555;
`;

const BalloonText = styled.p`
  margin: 0;
  padding-left: 5px;
  line-height: 21px;

  &:nth-child(2) { margin-top: 3px; }
  a { color: #1a1ae0; white-space: nowrap; }
`;

const BalloonTail = styled.svg`
  position: absolute;
  left: 170px;
  top: 78px;
`;

/* ---------- taskbar ---------- */

const Taskbar = styled.footer`
  display: flex;
  align-items: center;
  height: 39px;
  background: linear-gradient(90deg, #8496b3, #a7c0dc 5%, #a7c0dc 81%, #8295b0 86%, #8295b0);
`;

const StartButton = styled.button`
  width: 60px;
  padding-left: 8px;
`;

const TaskButton = styled.button`
  display: flex;
  align-items: center;
  justify-content: center;
  width: 58px;
  height: 39px;
  margin-right: ${({ $gap }) => $gap || 4}px;
  border: 1px solid #5b6f8b;
  border-radius: 3px;
  box-shadow: inset 0 0 0 1px #dbe7f4;
  background: linear-gradient(135deg, #d4e1ef, #a5b9d3);
`;

const Tray = styled.div`
  display: flex;
  align-items: center;
  gap: 8px;
  margin-left: auto;
  height: 100%;
`;

const Clock = styled.time`
  display: block;
  width: 58px;
  margin-left: 4px;
  text-align: center;
  line-height: 17px;
  color: #fff;
`;

const ShowDesktop = styled.button`
  width: 14px;
  height: 100%;
  border: 1px solid #45566c;
  background: linear-gradient(#6c7f99, #a9b9cd);
`;

/* ---------- data ---------- */

const MENU = [
  ["File", 42], ["Plots", 50], ["Draw", 46], ["Points", 52], ["View", 44], ["Lables", 47],
  ["SETTINGS", 71], ["Tools-1", 64], ["Tools", 48], ["My-Symbols", 81], ["Survey", 54],
  ["Surfaces", 68], ["Sections", 68], ["Profiles", 63], ["Grading", 66], ["Alignments", 80],
  ["Lines/Curves", 87], ["General", 59], ["Annotation", 73], ["Inquiry", 57], ["Express", 61],
  ["Insert", 46], ["Help", 42],
];

const TABS = [
  ["Home", 50], ["Insert", 50], ["Annotate", 69], ["Modify", 57], ["Analyze", 61], ["View", 45],
  ["Output", 58], ["Manage", 63], ["Express Tools", 91], ["Vault", 60],
];

const STANDARD_BAR = [
  ["px", "NEW", "LAY"], ["px", "FRZ", "LAY"], "|", "open", "save", "print", "preview", "spell", "cut",
  "copy", "paste", "matchProp", "|", "textEdit", ["tx", "TF"], "abcArc", "|", ["sh", "EA"], "pen",
  ["sh", "H"], "textBox", "dim", "dimArc", "leader", "callout", ["tx", "RB"], ["sm", "RX"], "dBox",
  ["tx", "LR"], ["px", "VP", "LF"], ["tx", "RC"], "vee", ["sm", "VS"], "green",
];

const SCREEN_MENU = [
  "AutoCAD", "* * * *", "DSCALE", "Q-NODE", "Q-END", "NODE-OFF", "ARROW HEAD", "E-PLINE", "-------",
  "Pan", "ZOOM .5X", "ZOOM-P", "ZOOM-W", "RESCALE", "-------", "DRAW ARC", "REGENALL", "LIST", "DIST",
  "NEWLAYER", "-------", "ACAD", "BLOCKS", "UTILITY", "SHELL", "AdCADD", "ASSIST", "LAST",
];

const STATUS = [
  ["INFER", 38], ["SNAP", 35], ["GRID", 33], ["ORTHO", 45, true], ["POLAR", 42], ["OSNAP", 43],
  ["3DOSNAP", 57], ["OTRACK", 50, true], ["DUCS", 36, true], ["DYN", 29], ["LWT", 30],
  ["TPY", 27, true], ["QP", 21], ["SC", 21],
];

/* ---------- parts ---------- */

const WinButtons = ({ push, label }) => (
  <WindowButtons $push={push}>
    {["min", "restore", "close"].map((n) => (
      <button key={n} aria-label={`${label} ${n}`}><Icon name={n} /></button>
    ))}
  </WindowButtons>
);

const Cmd = ({ icon, children, plain }) => (
  <Command><Icon name={icon} />{children}{!plain && <Caret />}</Command>
);

const T = ({ icon, w, on, caret }) => (
  <Tool $w={w} $on={on} aria-label={icon}><Icon name={icon} />{caret && <Caret />}</Tool>
);

const Pixel = ({ a, b }) => <PixelText>{a}<br />{b}</PixelText>;

const RibbonPanel = ({ title, w, left, gap, plain, children }) => (
  <Panel $w={w}>
    <PanelBody $left={left} $gap={gap}>{children}</PanelBody>
    <PanelTitle>{title}{!plain && <Caret $big />}</PanelTitle>
  </Panel>
);

const barItem = (item, i) => {
  if (item === "|") return <BarRule key={i} />;
  if (typeof item === "string") {
    return <BarButton key={i} aria-label={item}><Icon name={item} /></BarButton>;
  }
  const [kind, a, b] = item;
  return (
    <BarButton key={i}>
      {kind === "px" ? <Pixel a={a} b={b} /> : <Letters $shade={kind === "sh"} $small={kind === "sm"}>{a}</Letters>}
    </BarButton>
  );
};

const TopHeader = () => (
  <Header>
    <AppButton aria-label="Application menu">
      <svg width="39" height="39" viewBox="0 0 39 39">
        <path d="M4 7C9 1 17 2 21 4L20 9C14 6 11 8 13 12L17 19C20 24 24 22 26 18C27 24 22 29 17 27C13 25 12 22 11 19L8 12C7 9 5 10 4 7Z" fill="#d01a20" />
        <path d="M4 7C9 1 17 2 21 4L20 9C14 6 11 8 13 12L11 13C9 9 6 10 4 7Z" fill="#f59a96" />
        <path d="M12 18C11 23 8 27 4 29L10 31C13 29 15 26 16 24Z" fill="#8d1114" />
        <path d="M29 18H36L32.500 22Z" fill="#333" />
        <text x="26" y="37" fontSize="9" fontWeight="700" fill="#222" fontFamily="Liberation Sans">3D</text>
      </svg>
    </AppButton>
    <HeaderRows>
      <TitleRow>
        <QuickAccess>
          {["open", "save", "print", "undo"].map((n) => <button key={n} aria-label={n}><Icon name={n} /></button>)}
          <Caret $color="#555" />
          <button aria-label="redo"><Icon name="redo" /></button>
          <Caret $color="#777" />
          <button aria-label="sheet set"><Icon name="sheet" /></button>
        </QuickAccess>
        <Combo $w={181} $edge="#555">
          <Icon name="gear" />
          <Select aria-label="Workspace"><option>Civil 3D</option></Select>
          <Caret />
        </Combo>
        <svg width="14" height="10" viewBox="0 0 14 10"><path d="M3 1.500H11M4 4H10L7 7.500Z" fill="#111" stroke="#111" /></svg>
        <Title>{"AutoCAD Civil 3D 2011    07-116TS.dwg"}</Title>
        <Play />
        <SearchBox aria-label="Search" placeholder="Type a keyword or phrase" />
        <Tools>
          <button aria-label="search"><Icon name="binoc" /></button>
          <Caret />
          {["key", "dish", "star"].map((n) => <button key={n} aria-label={n}><Icon name={n} /></button>)}
          <Rule />
          <button aria-label="help"><Icon name="help" size={17} /></button>
          <Caret />
        </Tools>
        <WinButtons push label="application" />
      </TitleRow>
      <MenuRow>
        <MenuBar>{MENU.map(([t, w]) => <MenuItem key={t} $w={w}>{t}</MenuItem>)}</MenuBar>
        <WinButtons label="drawing" />
      </MenuRow>
    </HeaderRows>
  </Header>
);

const LayerIcons = ({ vp }) => (
  <>
    <Icon name="bulb" />
    <Icon name="sun" />
    {vp && <Icon name="vpFreeze" />}
    <Icon name="lock" />
  </>
);

const RibbonArea = () => (
  <Ribbon>
    <RibbonPanel title="Palettes" w={113} left={2}>
      <BigButton $w={60}><Icon name="tools" size={34} />Toolspace</BigButton>
      <Column>
        <Row><T icon="toolspace" on /><T icon="wrenches" on /></Row>
        <Row><T icon="survey" on /><T icon="toolbox" on /></Row>
        <Row><T icon="calc" /><T icon="propPalette" /></Row>
      </Column>
    </RibbonPanel>
    <RibbonPanel title="Create Ground Data" w={137} left={6}>
      <Column>
        <Cmd icon="importSurvey" plain>Import Survey Data</Cmd>
        <Cmd icon="points">Points</Cmd>
        <Cmd icon="surfaces">Surfaces</Cmd>
      </Column>
    </RibbonPanel>
    <RibbonPanel title="Create Design" w={322} left={7}>
      <Column $w={107}>
        <Cmd icon="plot">Plot</Cmd>
        <Cmd icon="feature">Feature Line</Cmd>
        <Cmd icon="grading">Grading</Cmd>
      </Column>
      <Column $w={96}>
        <Cmd icon="alignment">Alignment</Cmd>
        <Cmd icon="profile">Profile</Cmd>
        <Cmd icon="corridor">Corridor</Cmd>
      </Column>
      <Column>
        <Cmd icon="junction">Junctions</Cmd>
        <Cmd icon="assembly">Assembly</Cmd>
        <Cmd icon="pipe">Pipe Network</Cmd>
      </Column>
    </RibbonPanel>
    <RibbonPanel title="Profile & Section Views" w={133} left={13} plain>
      <Column>
        <Cmd icon="profileView">Profile View</Cmd>
        <Cmd icon="sampleLines" plain>Sample Lines</Cmd>
        <Cmd icon="sectionViews">Section Views</Cmd>
      </Column>
    </RibbonPanel>
    <RibbonPanel title="Draw" w={106} left={3} gap={1}>
      <Column>
        <T icon="line" w={35} caret /><T icon="divide" w={35} caret /><T icon="fillet" w={35} caret />
      </Column>
      <Column $w={39}>
        <T icon="arc" w={36} caret /><T icon="circle" w={36} caret /><T icon="ellipse" w={36} caret />
      </Column>
      <Column><T icon="pline" /><T icon="rect" /><T icon="hatch" /></Column>
    </RibbonPanel>
    <RibbonPanel title="Modify" w={178} left={2}>
      <BigButton $w={61} $top={5}>
        <span>Match<br />Properties</span>
      </BigButton>
      <Column $w={76}>
        <Row><T icon="copyObj" /><T icon="rotate" /><T icon="stretch" /></Row>
        <Row><T icon="scale" /><T icon="offset" /><T icon="mirror" /></Row>
        <Row><T icon="erase" /><T icon="explode" /><T icon="array" /></Row>
      </Column>
      <Column><T icon="order" w={36} caret /><T icon="trim" w={36} caret /><T icon="fillet2" w={36} caret /></Column>
    </RibbonPanel>
    <RibbonPanel title="Layers" w={213} left={2}>
      <Column>
        <Row $gap={4}>
          <T icon="layerProps" />
          <Tool><Pixel a="NEW" b="LAY" /></Tool>
          <Row><T icon="layerMatch" /><T icon="layerPrev" /></Row>
          <Row><T icon="layerIso" /><T icon="layerUniso" /></Row>
          <Row><Tool><Pixel a="FRZ" b="LAY" /></Tool><T icon="layerOff" /></Row>
        </Row>
        <Combo $w={199}>
          <Select aria-label="Layer state"><option>Unsaved Layer State</option></Select>
          <Caret $big />
        </Combo>
        <Combo $w={199}>
          <LayerIcons />
          <Swatch $s={14} $color="#fff" />
          <Spacer $f="0 0 0" />
          <Select aria-label="Layer"><option>NEW2</option></Select>
          <Caret $big />
        </Combo>
      </Column>
    </RibbonPanel>
    <RibbonPanel title="Clipboard" w={81} plain>
      <BigButton $w={54}><Icon name="pasteBig" size={34} />Paste<Caret /></BigButton>
      <Column><T icon="cut" /><T icon="copy" /><T icon="matchProp" /></Column>
    </RibbonPanel>
  </Ribbon>
);

const Toolbars = () => (
  <Dock>
    <Row>
      <Toolbar $grip={8} $left={1} $gap={1}>
        <BarButton aria-label="Layer properties"><Icon name="layerProps" /></BarButton>
        <Combo $w={298} $edge="#555" $dense $gap={1}>
          <LayerIcons vp />
          <Swatch $s={11} $color="#fff" />
          <Spacer $f="0 0 1px" />
          <Select aria-label="Current layer"><option>NEW2</option></Select>
          <Caret $big $color="#000" />
        </Combo>
        <Row>
          {["layerCurrent", "layerPrev", "layerStates"].map((n) => (
            <BarButton key={n} aria-label={n}><Icon name={n} size={17} /></BarButton>
          ))}
        </Row>
      </Toolbar>
      <Toolbar $grip={9} $gap={6}>
        <Combo $w={150} $edge="#555" $dense $gap={4}>
          <Swatch $s={11} $color="#f0f" />
          <Select aria-label="Color"><option>Magenta</option></Select>
          <Caret $big $color="#000" />
        </Combo>
        <Combo $w={160} $edge="#555" $dense $gap={6}>
          <LineSample $w={59} />
          <Select aria-label="Linetype"><option>ByLayer</option></Select>
          <Caret $big $color="#000" />
        </Combo>
        <Combo $w={125} $edge="#555" $dense $gap={6}>
          <LineSample $w={34} />
          <Select aria-label="Lineweight"><option>ByLayer</option></Select>
          <Caret $big $color="#000" />
        </Combo>
        <Combo $w={119} $edge="#bbb" $dense $off>
          <Spacer $f="0 0 2px" />
          <Select aria-label="Plot style" disabled><option>ByColor</option></Select>
          <Caret $big $color="#999" />
        </Combo>
      </Toolbar>
    </Row>
    <Toolbar $grip={8}>{STANDARD_BAR.map(barItem)}</Toolbar>
  </Dock>
);

/* tiny text that reads only as texture at this zoom */
const Block = ({ x, y, w, h, c = "#00f400", n = 0.05 }) => {
  let s = x * 131 + y * 37 + w;
  const rnd = () => {
    s = (s * 1103515245 + 12345) % 2147483648;
    return s / 2147483648;
  };
  const holes = [];
  for (let i = 0; i < w * h * n; i++) {
    holes.push(`M${x + Math.floor(rnd() * w)} ${y + Math.floor(rnd() * h)}h1v1h-1z`);
  }
  return <><rect x={x} y={y} width={w} height={h} fill={c} /><path d={holes.join("")} fill="#202a2c" /></>;
};

const GREEN = [
  [22, 64, 73, 7], [23, 71, 43, 1], [23, 78, 55, 1], [23, 81, 31, 1], [60, 81, 33, 1],
  [22, 89, 11, 2], [33, 89, 21, 1], [50, 89, 4, 2], [59, 89, 12, 2], [71, 89, 22, 1], [88, 89, 5, 2],
  [23, 97, 16, 4], [39, 100, 7, 1], [45, 97, 1, 5], [22, 104, 73, 4], [22, 109, 73, 1], [22, 112, 73, 1],
  [22, 114, 73, 10], [22, 124, 25, 1], [23, 127, 16, 1], [23, 130, 10, 2], [23, 132, 50, 1], [23, 134, 11, 2],
  [23, 135, 50, 1], [23, 138, 24, 2], [23, 139, 50, 1], [23, 141, 16, 2], [23, 142, 50, 1],
  [23, 155, 72, 4], [22, 165, 35, 1], [22, 170, 35, 1], [22, 173, 11, 1], [48, 173, 5, 1],
  [23, 180, 15, 4], [38, 183, 8, 1], [45, 179, 1, 5], [23, 187, 72, 4], [22, 192, 73, 1], [22, 195, 73, 1],
  [22, 197, 73, 9], [22, 206, 25, 2], [23, 210, 16, 1], [22, 213, 51, 1], [23, 216, 10, 2], [22, 217, 51, 1],
  [23, 219, 28, 2], [22, 221, 51, 1], [23, 223, 20, 2], [22, 226, 51, 1],
  [106, 64, 73, 12], [106, 76, 45, 3], [106, 90, 45, 2], [106, 92, 25, 2], [106, 107, 73, 5],
  [106, 123, 73, 10], [106, 133, 52, 1], [106, 137, 73, 9], [106, 146, 74, 3], [106, 149, 21, 1],
  [13, 240, 38, 10], [13, 257, 37, 8], [18, 267, 30, 2], [13, 270, 22, 1],
  [54, 238, 37, 13], [54, 254, 24, 1], [54, 258, 37, 5], [56, 265, 30, 2], [54, 268, 24, 2],
  [109, 239, 37, 7], [109, 248, 37, 8], [109, 258, 37, 5], [112, 265, 30, 3], [109, 269, 20, 2],
  [149, 238, 37, 14], [149, 252, 28, 3], [151, 260, 24, 1], [172, 268, 12, 2],
];

const RED = [
  [74, 27, 53, 4], [80, 31, 40, 2], [71, 35, 58, 3], [79, 39, 42, 3], [53, 43, 95, 6], [52, 49, 60, 1],
  [52, 51, 31, 3], [23, 61, 37, 2], [106, 61, 43, 2], [106, 103, 35, 2], [106, 120, 39, 2], [23, 151, 22, 3],
  [13, 15, 17, 6], [33, 15, 2, 6], [35, 15, 2, 1], [39, 16, 1, 4], [42, 14, 1, 7], [146, 14, 38, 3],
  [13, 234, 38, 4], [54, 234, 37, 2], [109, 234, 37, 3], [149, 234, 37, 3], [13, 252, 38, 3],
];

const ParcelMap = () => (
  <Sheet width="202" height="291" viewBox="0 0 202 291">
    <g shapeRendering="crispEdges">
      <rect x=".5" y=".5" width="200" height="289" fill="none" stroke="#dede2a" />
      <path d="M11.500 11V278M12.500 11V278" stroke="#e01ee0" />
      <path d="M12 11.500H190M12 278.500H190M189.500 11V278" stroke="#e01ee0" />
      <path d="M18 10.500H184M18 277.500H184M190.500 16V272" stroke="#a884b0" strokeDasharray="1 2" />
      {GREEN.map(([x, y, w, h], i) => <Block key={i} x={x} y={y} w={w} h={h} />)}
      {RED.map(([x, y, w, h], i) => <Block key={i} x={x} y={y} w={w} h={h} c="#f80404" n={0.12} />)}
      <path d="M12.500 233.500H92V272M52.500 233V272M12.500 233V272M108.500 272V233.500H188.500V272M148.500 233V272M187 233V272" fill="none" stroke="#e01818" />
      <path d="M12 272.500H92M108 272.500H189" stroke="#b07a18" />
    </g>
    <circle cx="168" cy="89" r="8.500" fill="#1ef01e" />
    <path d="M168 84V94M163 89H173M166 87L170 91M170 87L166 91" stroke="#123018" strokeWidth="1.200" />
    <text x="47" y="24" fontSize="7" fill="#ff1cff" stroke="#ff1cff" strokeWidth=".6" fontFamily="Liberation Sans">PARCEL MAP L.A. NO. 2003-0030</text>
    <g fill="#1b7fe6" stroke="#4a78a8">
      <path d="M6.500 6.500H16.500V16.500H6.500ZM184.500 6.500H194.500V16.500H184.500ZM6.500 273.500H16.500V283.500H6.500ZM184.500 273.500H194.500V283.500H184.500Z" />
      <path d="M92.500 9.500H107.500V13.500H92.500ZM92.500 276.500H107.500V280.500H92.500ZM9.500 137.500H13.500V152.500H9.500ZM187.500 137.500H191.500V152.500H187.500Z" />
    </g>
  </Sheet>
);

const ViewCube = () => (
  <Svg width="102" height="102" viewBox="-6 0 102 102">
    <circle cx="39" cy="48" r="39" fill="none" stroke="#4a515a" strokeWidth="7" />
    <rect x="20" y="29" width="38" height="38" fill="#b2b4b6" />
    <rect x="28" y="37" width="22" height="22" fill="#a3a8b0" />
    <text x="39" y="52" textAnchor="middle" fontSize="10" fontWeight="700" fill="#515a68" fontFamily="Roboto">TOP</text>
    <g fill="#b9bcc0" fontFamily="Liberation Sans" fontWeight="700" fontSize="15" textAnchor="middle">
      <text x="39" y="14">N</text><text x="79" y="54">E</text><text x="39" y="94">S</text><text x="1" y="54">W</text>
    </g>
  </Svg>
);

const NavBar = () => (
  <Svg width="34" height="214" viewBox="0 0 34 214">
    <rect x="1" y="1" width="32" height="212" rx="4" fill="#575c62" stroke="#474d54" />
    <g fill="none" stroke="#3b4149" strokeWidth="1.200">
      <circle cx="27" cy="6" r="3" /><circle cx="27" cy="207" r="3" />
      <rect x="7" y="21" width="20" height="20" rx="6" /><circle cx="17" cy="31" r="9" /><circle cx="17" cy="31" r="5" />
      <path d="M10 79L5 74L8 73L12 76L10 66L12 65L15 73L14 63H16L18 72V63H20L21 73L23 65L25 66L24 78L21 84H13Z" />
      <path d="M6 92L24 108M22 92L7 108M4 92H8M20 92H24" /><circle cx="22" cy="107" r="5" /><path d="M25 111L29 115" />
      <path d="M15 147V131L17 127L19 131V147ZM8 139C8 134 27 134 27 139C27 144 12 144 9 142M9 146V141H14" />
      <path d="M5 171H11V177H5ZM14 171H20V177H14ZM23 171H29V177H23ZM5 180H21V193H5Z" />
    </g>
    <path d="M14 50H20L17 53ZM14 120H20L17 123ZM14 158H20L17 161ZM10 183L16 186.500L10 190Z" fill="#3b4149" />
  </Svg>
);

const Notification = () => (
  <Balloon role="status">
    <BalloonHead>
      <Icon name="info" />
      <BalloonTitle>Plot and Publish Job Complete</BalloonTitle>
      <BalloonClose aria-label="Close"><Icon name="close" size={14} /></BalloonClose>
    </BalloonHead>
    <BalloonText>No errors or warnings found</BalloonText>
    <BalloonText><a href="#details">Click to view plot and publish details...</a></BalloonText>
    <BalloonTail width="22" height="22" viewBox="0 0 22 22">
      <path d="M1 0H19V19L1 0" fill="#ffffe1" />
      <path d="M1 .5L19.500 19V.5" fill="none" stroke="#000" />
    </BalloonTail>
  </Balloon>
);

const StatusIcon = ({ icon, w = 22 }) => (
  <StatusToggle $w={w} aria-label={icon}><Icon name={icon} /></StatusToggle>
);

const TaskbarArea = () => (
  <Taskbar>
    <StartButton aria-label="Start">
      <Svg width="38" height="38" viewBox="0 0 38 38">
        <defs>
          <radialGradient id="orb" cx=".5" cy=".8" r=".8"><stop offset="0" stopColor="#5fd0f0" /><stop offset=".6" stopColor="#1e62a8" /><stop offset="1" stopColor="#8fb8dc" /></radialGradient>
        </defs>
        <circle cx="19" cy="19" r="18" fill="url(#orb)" stroke="#35536f" />
        <path d="M10 12C13 9 16 10 18 11L17 18C14 16 11 17 9 18Z" fill="#f0662a" />
        <path d="M20 12C23 13 26 13 29 11L27 18C24 20 21 19 19 18Z" fill="#8cc63f" />
        <path d="M9 20C11 18 14 18 17 20L15 27C12 25 10 26 7 27Z" fill="#3fa0e6" />
        <path d="M19 20C22 21 24 21 27 20L25 27C22 29 19 28 17 27Z" fill="#fbc22d" />
      </Svg>
    </StartButton>
    <TaskButton aria-label="Explorer">
      <Svg width="32" height="32" viewBox="0 0 32 32">
        <path d="M2 5L5 2H14L15 5H28L30 8V28H2Z" fill="#f5dd8d" stroke="#b89a48" />
        <path d="M4 8H28V27H4Z" fill="#fbeeb4" /><path d="M5 3H8V5H5ZM14 4H17V6H14ZM21 6H24V8H21Z" fill="#4a9a3e" />
        <path d="M5 31V20C5 17 8 18 10 18H23C26 18 27 18 27 21V31H23V24H10V31Z" fill="#bfe4f4" stroke="#62a9c9" />
      </Svg>
    </TaskButton>
    <TaskButton aria-label="Chrome">
      <Svg width="30" height="30" viewBox="0 0 30 30">
        <circle cx="15" cy="15" r="14" fill="#f7cf2c" />
        <path d="M15 15L3 8A14 14 0 0 1 27.500 9H15Z" fill="#dc3b2c" />
        <path d="M15 29A14 14 0 0 1 2.800 8L10 18L17 22Z" fill="#39a04a" />
        <circle cx="15" cy="15" r="6.500" fill="#fff" /><circle cx="15" cy="15" r="5" fill="#3c7bd0" />
      </Svg>
    </TaskButton>
    <TaskButton aria-label="Photoshop">
      <Svg width="30" height="28" viewBox="0 0 30 28">
        <rect x="1" y="1" width="28" height="26" rx="1" fill="#0b4f93" stroke="#0a2f5c" />
        <path d="M1 1H29V10L1 20Z" fill="#1c6bb5" />
        <text x="15" y="19" textAnchor="middle" fontSize="15" fontWeight="700" fill="#7fd0f5" fontFamily="Lato">Ps</text>
      </Svg>
    </TaskButton>
    <TaskButton $gap={5} aria-label="Civil 3D">
      <Svg width="32" height="32" viewBox="0 0 32 32">
        <path d="M1 3H31V24H1Z" fill="#c9c9c9" /><path d="M1 23H31V31H1Z" fill="#1c1c1c" />
        <path d="M6 3C10 0 16 0 19 2L17 7C13 5 11 6 12 9L15 14C17 18 21 17 24 14C24 20 19 23 15 20C12 18 11 15 10 13L8 9C7 7 5 6 6 3Z" fill="#d3161c" />
        <path d="M10 13C9 17 7 20 4 21L9 22C12 21 13 19 14 17Z" fill="#8d0e12" />
        <text x="20" y="30" fontSize="8" fontWeight="700" fill="#fff" fontFamily="Liberation Sans">3D</text>
      </Svg>
    </TaskButton>
    <TaskButton aria-label="Media Player">
      <Svg width="30" height="28" viewBox="0 0 30 28">
        <path d="M6 2H28V25H6Z" fill="#7db6de" stroke="#3c7db0" /><path d="M2 3H24V26H2Z" fill="#a7d2ee" stroke="#3c7db0" />
        <circle cx="12" cy="14" r="9" fill="#f07d1d" stroke="#fbd2a0" /><path d="M9 9L17 14L9 19Z" fill="#fff" />
      </Svg>
    </TaskButton>
    <Tray>
      <Svg width="32" height="32" viewBox="0 0 32 32">
        <circle cx="16" cy="16" r="15" fill="#0b1f44" stroke="#2a6fc4" strokeWidth="2" />
        <text x="16" y="26" textAnchor="middle" fontSize="27" fontWeight="700" fill="#fff" fontFamily="Liberation Sans">?</text>
      </Svg>
      <Row $gap={4}>
        <Spacer $f="0 0 1px" /><Arrow $dir="up" $c="#fff" $s={4} /><Spacer $f="0 0 1px" />
      </Row>
      <Svg width="17" height="17" viewBox="0 0 17 17">
        <rect x="1" y="1" width="15" height="15" fill="#e9a04b" stroke="#fbe0b8" /><circle cx="8" cy="8" r="5" fill="none" stroke="#8a4a16" /><path d="M3 8H13M8 3V13" stroke="#8a4a16" />
        <circle cx="12" cy="12" r="4.500" fill="#d32020" /><path d="M10 10L14 14M14 10L10 14" stroke="#fff" strokeWidth="1.500" />
      </Svg>
      <Svg width="17" height="17" viewBox="0 0 17 17">
        <path d="M4.500 4.500H15.500V12H4.500ZM7 14.500H13M10 12V14" fill="#5f7590" stroke="#fff" /><path d="M1 1V5H4V1M2.500 5V13H5" fill="none" stroke="#fff" />
      </Svg>
      <Svg width="16" height="16" viewBox="0 0 16 16">
        <path d="M2 5H5L8 2V14L5 11H2Z" fill="#fff" /><path d="M10 5C12 7 12 9 10 11M12 3C15 6 15 10 12 13" stroke="#fff" fill="none" />
      </Svg>
      <Clock>10:07 AM<br />1/29/2013</Clock>
      <ShowDesktop aria-label="Show desktop" />
    </Tray>
  </Taskbar>
);

export default function App() {
  return (
    <Screen>
      <GlobalStyle />
      <TopHeader />
      <TabBar>
        {TABS.map(([t, w], i) => <Tab key={t} $w={w} $on={i === 0}>{t}</Tab>)}
        <RibbonToggle aria-label="Minimize ribbon">
          <svg width="15" height="9" viewBox="0 0 15 9"><rect x=".5" y=".5" width="14" height="8" rx="2" fill="#eee" stroke="#333" /><path d="M5 6L7.500 3L10 6Z" fill="#222" /></svg>
          <Caret $color="#111" />
        </RibbonToggle>
      </TabBar>
      <RibbonArea />
      <Toolbars />
      <Workspace>
        <DrawingArea>
          <CanvasRow>
            <Canvas>
              <ParcelMap />
              <CrossHair shapeRendering="crispEdges">
                <path d="M401 28.500H408M401 34.500H408M401.500 28V35M407.500 28V35" stroke="#fff" />
                <line x1="0" x2="408" y1="31.500" y2="31.500" stroke="#fff" />
                <line x1="408" x2="100%" y1="31.500" y2="31.500" stroke="#fff" />
                <line x1="404.500" x2="404.500" y1="0" y2="100%" stroke="#fff" />
              </CrossHair>
              <Ucs width="80" height="80" viewBox="0 0 80 80" shapeRendering="crispEdges">
                <path d="M6.500 21V71M6.500 71.500H57M2.500 66.500H11.500V75.500H2.500Z" fill="none" stroke="#fff" />
                <path d="M61 57L74 70M74 57L61 70M8 4L14.500 10.500M21 4L14.500 10.500V17" fill="none" stroke="#fff" shapeRendering="auto" />
              </Ucs>
              <Overlay>
                <ViewCube />
                <Wcs>WCS<svg width="12" height="8" viewBox="0 0 12 8"><path d="M1 1H11L6 7Z" fill="none" stroke="#868c96" /></svg></Wcs>
                <NavBar />
              </Overlay>
            </Canvas>
            <VScroll>
              <Arrow $dir="up" /><Spacer $f={20} /><Thumb /><Spacer $f={9} /><Arrow $dir="down" />
            </VScroll>
          </CanvasRow>
          <LayoutBar>
            <LayoutTabs>
              {[["left", true], ["left", false], ["right", false], ["right", true]].map(([dir, end]) => (
                <NavButton key={dir + end} aria-label={`${end ? "last" : "step"} ${dir}`}>
                  {end && dir === "left" && <Tick />}
                  <Arrow $dir={dir} $c="#555" $s={4} />
                  {end && dir === "right" && <Tick />}
                </NavButton>
              ))}
              <LayoutTab $w={54} $on>Model</LayoutTab>
              <LayoutTab $w={50}>Layout1</LayoutTab>
              <TabEdge />
            </LayoutTabs>
            <HScroll>
              <Splitter /><Arrow $dir="left" /><Spacer /><Thumb /><Spacer $f="0 0 198px" />
            </HScroll>
          </LayoutBar>
        </DrawingArea>
        <ScreenMenu>
          {SCREEN_MENU.map((t, i) => <ScreenMenuItem key={i}>{t}</ScreenMenuItem>)}
        </ScreenMenu>
      </Workspace>
      <CommandWindow>
        <Grip />
        <CommandText>
          <History>
            <Log>{'Command: _endp Unknown command "ENDP".  Press F1 for help.\nCommand:'}</Log>
            <HistoryScroll><Arrow $dir="up" /><Arrow $dir="down" /></HistoryScroll>
          </History>
          <Prompt>Command:<PromptInput aria-label="Command" /><PromptScroll><Thumb /><Arrow $dir="right" /></PromptScroll></Prompt>
        </CommandText>
      </CommandWindow>
      <StatusBar>
        <Coordinates>250.14, 597.46, 0.00</Coordinates>
        {STATUS.map(([t, w, on]) => <StatusToggle key={t} $w={w} $on={on}>{t}</StatusToggle>)}
        <StatusGap $w={2} />
        <Spacer />
        <StatusToggle $w={44}>MODEL</StatusToggle>
        <StatusIcon icon="modelSpace" />
        <StatusIcon icon="quickView" w={23} />
        <StatusGap $w={11} />
        <StatusToggle $w={51}><Icon name="annoScale" />1:1<Caret $big /></StatusToggle>
        <StatusIcon icon="annoVis" />
        <StatusIcon icon="annoAuto" />
        <StatusGap $w={6} />
        <StatusIcon icon="gear" />
        <StatusIcon icon="padlock" />
        <StatusIcon icon="hardware" />
        <StatusToggle $w={92}>
          <Icon name="isolate" /><Spacer $f="0 0 3px" /><Icon name="plotDone" /><Icon name="layerRec" /><Icon name="bulb" />
        </StatusToggle>
        <StatusToggle $w={11} aria-label="Tray settings"><Caret /></StatusToggle>
        <StatusIcon icon="cleanScreen" w={24} />
      </StatusBar>
      <TaskbarArea />
      <Notification />
    </Screen>
  );
}
